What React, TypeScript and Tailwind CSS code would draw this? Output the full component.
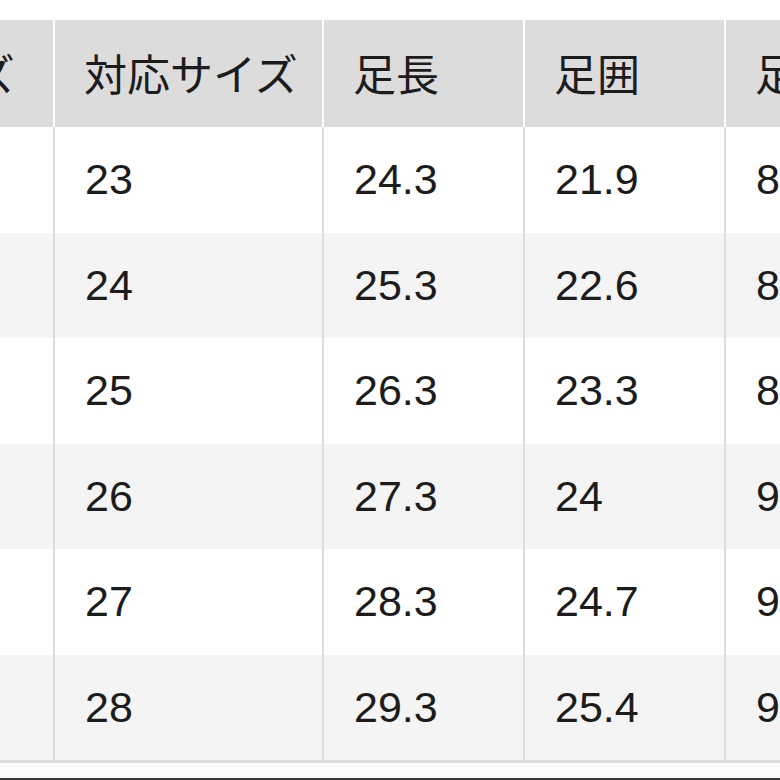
const headers = ['サイズ', '対応サイズ', '足長', '足囲', '足幅'];

const rows = [
  ['S', '23', '24.3', '21.9', '8.9'],
  ['M', '24', '25.3', '22.6', '8.9'],
  ['L', '25', '26.3', '23.3', '8.9'],
  ['XL', '26', '27.3', '24', '9.1'],
  ['2XL', '27', '28.3', '24.7', '9.3'],
  ['3XL', '28', '29.3', '25.4', '9.5'],
];

// widths include the 2px right divider
const widths = ['w-[197px]', 'w-[269px]', 'w-[201px]', 'w-[201px]', 'w-[201px]'];

export default function App() {
  return (
    <div
      className="w-[780px] h-[780px] overflow-hidden bg-white flex flex-col text-[#1c1c1c]"
      style={{ fontFamily: '"Liberation Sans", "Noto Sans CJK JP", sans-serif' }}
    >
      <div className="mt-[20px] ml-[-142px] flex flex-col border-b-[3px] border-[#dedede] w-max">
        {/* header */}
        <div className="flex h-[107px] bg-[#dcdcdc]">
          {headers.map((h, i) => (
            <div
              key={h}
              className={`${widths[i]} shrink-0 flex items-center pl-[29px] pt-[5px] text-[43px] leading-none whitespace-nowrap ${
                i < headers.length - 1 ? 'border-r-2 border-white' : ''
              }`}
            >
              {h}
            </div>
          ))}
        </div>

        {/* body */}
        {rows.map((row, r) => (
          <div key={r} className={`flex h-[105.5px] ${r % 2 === 1 ? 'bg-[#f4f4f4]' : 'bg-white'}`}>
            {row.map((v, i) => (
              <div
                key={i}
                className={`${widths[i]} shrink-0 flex items-center pl-[30px] text-[43px] leading-none ${
                  i < row.length - 1 ? 'border-r-2 border-[#dcdcdc]' : ''
                }`}
              >
                {v}
              </div>
            ))}
          </div>
        ))}
      </div>
      <div className="flex-1 bg-[#fbfbfb]" />
      <div className="h-[2px] bg-[#3a3a3a]" />
    </div>
  );
}
